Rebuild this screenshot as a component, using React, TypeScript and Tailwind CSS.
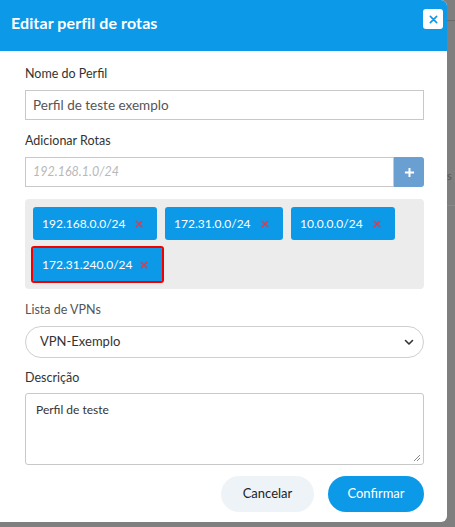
import React from "react";

const tags = [
  { ip: "192.168.0.0/24", w: "w-[124px]" },
  { ip: "172.31.0.0/24", w: "w-[118px]" },
  { ip: "10.0.0.0/24", w: "w-[104px]" },
];

function Tag({ ip, w, selected }: { ip: string; w: string; selected?: boolean }) {
  return (
    <div
      className={`${w} h-[33px] flex items-center justify-between pl-[9px] pr-[14px] bg-[#0c99e8] text-white text-[12px] ${
        selected ? "outline-2 outline-[#f00000] rounded-[1px]" : "rounded-[3px]"
      }`}
    >
      <span>{ip}</span>
      <svg width="8" height="8" viewBox="0 0 10 10">
        <path d="M1.5 1.5 L8.5 8.5 M8.5 1.5 L1.5 8.5" stroke="#e0394a" strokeWidth="1.7" strokeLinecap="round" />
      </svg>
    </div>
  );
}

export default function App() {
  return (
    <div
      className="w-[455px] h-[527px] bg-[#7f7f7f] flex overflow-hidden"
      style={{ fontFamily: "Lato, 'Noto Sans', sans-serif" }}
    >
      <div className="w-[447px] h-[522px] shrink-0 bg-white rounded-tr-[6px] rounded-br-[6px] overflow-hidden flex flex-col">
        {/* header */}
        <div className="h-[51px] bg-[#0c99e8] flex items-start justify-between pl-[11px] pr-[4px]">
          <h1 className="mt-[13px] text-white font-bold text-[16px] leading-[20px] tracking-[0.1px]">Editar perfil de rotas</h1>
          <button className="mt-[9px] w-[20px] h-[20px] bg-white rounded-[3px] flex items-center justify-center">
            <svg width="9" height="9" viewBox="0 0 10 10">
              <path d="M1.5 1.5 L8.5 8.5 M8.5 1.5 L1.5 8.5" stroke="#0c99e8" strokeWidth="1.8" strokeLinecap="round" />
            </svg>
          </button>
        </div>

        {/* body */}
        <div className="flex flex-col pl-[25px] pr-[23px] pt-[14px] text-[#333]">
          <label className="text-[12.5px] text-[#333] leading-[18px]">Nome do Perfil</label>
          <div className="mt-[7px] h-[30px] border border-[#c8c8c8] flex items-center px-[7px] text-[13.5px] text-[#555]">
            Perfil de teste exemplo
          </div>

          <label className="mt-[12px] text-[12.5px] leading-[18px]">Adicionar Rotas</label>
          <div className="mt-[7px] h-[30px] flex">
            <div className="flex-1 border border-[#c8c8c8] flex items-center px-[7px] text-[12.5px] italic text-[#b8b8b8]">
              192.168.1.0/24
            </div>
            <div className="w-[30px] bg-[#6a9fd2] rounded-r-[3px] flex items-center justify-center">
              <svg width="11" height="11" viewBox="0 0 12 12">
                <path d="M6 1 V11 M1 6 H11" stroke="white" strokeWidth="2.2" />
              </svg>
            </div>
          </div>

          <div className="mt-[12px] h-[90px] bg-[#ececec] rounded-[4px] px-[8px] pt-[8px] flex flex-wrap content-start gap-x-[8px] gap-y-[8px]">
            {tags.map((t) => (
              <Tag key={t.ip} ip={t.ip} w={t.w} />
            ))}
            <Tag ip="172.31.240.0/24" w="w-[129px]" selected />
          </div>

          <label className="mt-[12px] text-[12.5px] leading-[18px] text-[#555]">Lista de VPNs</label>
          <div className="mt-[7px] h-[32px] border border-[#cfcfcf] rounded-full flex items-center justify-between pl-[14px] pr-[8px] text-[13px] text-[#333]">
            <span>VPN-Exemplo</span>
            <svg width="12" height="12" viewBox="0 0 12 12">
              <path d="M2.5 4.5 L6 8 L9.5 4.5" stroke="#333" strokeWidth="1.6" fill="none" strokeLinecap="round" strokeLinejoin="round" />
            </svg>
          </div>

          <label className="mt-[11px] text-[12.5px] leading-[18px]">Descrição</label>
          <div className="mt-[6px] h-[72px] border border-[#c8c8c8] rounded-[3px] relative px-[10px] pt-[7px] text-[12px] text-[#333]">
            Perfil de teste
            <svg width="8" height="8" viewBox="0 0 8 8" className="absolute right-[2px] bottom-[2px]">
              <path d="M7 1 L1 7 M7 4 L4 7" stroke="#888" strokeWidth="1" />
            </svg>
          </div>

          <div className="mt-[11px] flex justify-end gap-[14px]">
            <button className="w-[93px] h-[36px] rounded-full bg-[#eef3f7] text-[#222] text-[13px]">Cancelar</button>
            <button className="w-[96px] h-[36px] rounded-full bg-[#0c99e8] text-white text-[13px]">Confirmar</button>
          </div>
        </div>
      </div>

      {/* dimmed page behind the dialog */}
      <div className="flex-1 flex flex-col">
        <div className="h-[20px]" />
        <div className="h-[1px] bg-[#6a6a6a]" />
        <div className="h-[150px]" />
        <div className="text-[11px] text-[#555] leading-[10px]">s</div>
        <div className="h-[24px]" />
        <div className="h-[1px] bg-[#8a8a8a]" />
      </div>
    </div>
  );
}
